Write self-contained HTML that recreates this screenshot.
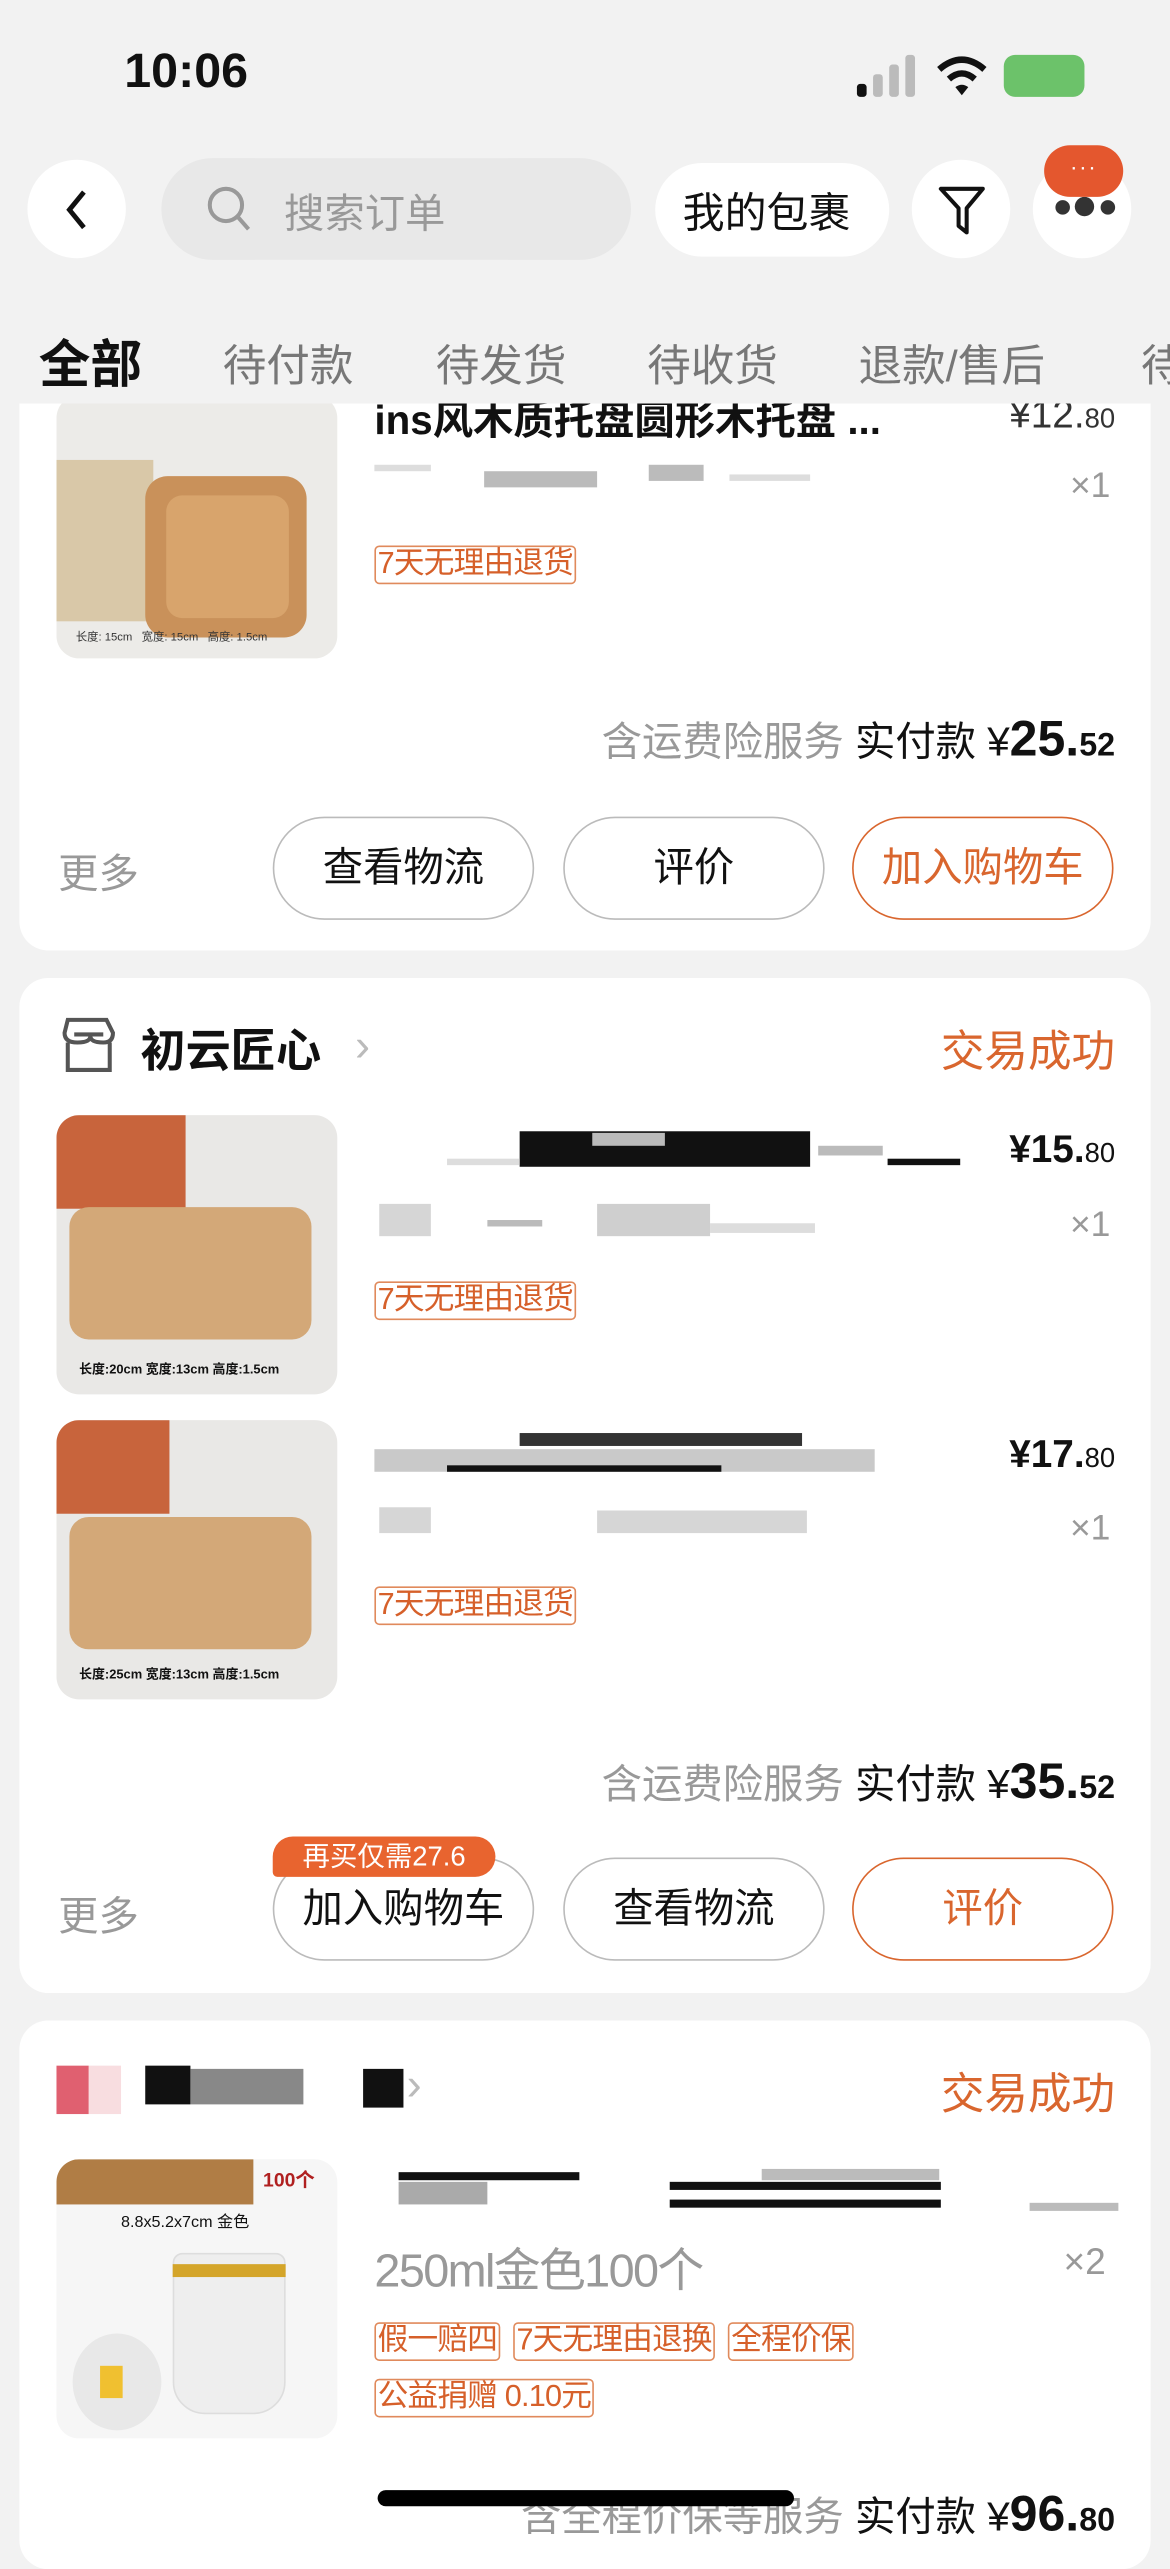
<!DOCTYPE html>
<html><head><meta charset="utf-8">
<style>
*{margin:0;padding:0;box-sizing:border-box}
html,body{width:1170px;height:2532px;overflow:hidden;background:#f2f2f2}
#w{position:absolute;left:0;top:0;width:725px;height:1569px;transform:scale(1.61379);transform-origin:0 0;font-family:"Liberation Sans","Noto Sans CJK SC",sans-serif;color:#111}
.a{position:absolute}
.card{position:absolute;left:12px;width:701px;background:#fff;border-radius:18px}
.t{position:absolute;white-space:nowrap}
.btn{position:absolute;height:64px;border:1px solid #bbb;border-radius:32px;background:#fff;font-size:25px;text-align:center;line-height:62px;color:#111}
.btn.o{border-color:#d9662e;color:#d9662e}
.tag{position:absolute;height:24px;border:1px solid #e08a5c;border-radius:3px;color:#d6602a;font-size:19px;line-height:22px;padding:0 1px;letter-spacing:-0.5px;white-space:nowrap}
.row{position:absolute;display:flex;gap:8px}
.row .tag{position:static}
.gray{color:#999}
.price{position:absolute;font-size:24px;font-weight:bold;right:22px}
.price small{font-size:17px;font-weight:normal}
.blk{position:absolute;background:#111}
.g1{position:absolute;background:#bbb}
.g2{position:absolute;background:#ddd}
.img{position:absolute;left:23px;width:174px;height:173px;border-radius:14px;overflow:hidden;background:#e9e8e6}
.tot{position:absolute;right:22px;font-size:25px;white-space:nowrap}
.tot b{font-size:31px}
.tot b small{font-size:20px}
</style></head><body><div id="w">
<div class="t" style="left:77px;top:28px;font-size:30px;font-weight:600">10:06</div>
<div class="a" style="left:531px;top:52px;width:6px;height:8px;background:#111;border-radius:2px"></div>
<div class="a" style="left:541px;top:46px;width:6px;height:14px;background:#bbb;border-radius:2px"></div>
<div class="a" style="left:551px;top:40px;width:6px;height:20px;background:#bbb;border-radius:2px"></div>
<div class="a" style="left:561px;top:34px;width:6px;height:26px;background:#bbb;border-radius:2px"></div>
<svg class="a" style="left:580px;top:34px" width="32" height="26" viewBox="0 0 32 26"><path d="M2 9 Q16 -3 30 9" stroke="#111" stroke-width="4" fill="none"/><path d="M8 15 Q16 8 24 15" stroke="#111" stroke-width="4" fill="none"/><path d="M12 20 L16 25 L20 20 Q16 17 12 20Z" fill="#111"/></svg>
<div class="a" style="left:622px;top:34px;width:50px;height:26px;background:#6cc26a;border-radius:7px"></div>
<div class="a" style="left:17px;top:99px;width:61px;height:61px;border-radius:50%;background:#fff"></div>
<svg class="a" style="left:38px;top:116px" width="20" height="28"><path d="M14 3 L5 14 L14 25" stroke="#111" stroke-width="3" fill="none"/></svg>
<div class="a" style="left:100px;top:98px;width:291px;height:63px;border-radius:32px;background:#e8e8e8"></div>
<svg class="a" style="left:127px;top:114px" width="30" height="32"><circle cx="13" cy="13" r="10" stroke="#999" stroke-width="2.5" fill="none"/><path d="M20 20 L27 28" stroke="#999" stroke-width="2.5"/></svg>
<div class="t" style="left:176px;top:113px;font-size:25px;color:#999">搜索订单</div>
<div class="a" style="left:406px;top:101px;width:145px;height:58px;border-radius:29px;background:#fff"></div>
<div class="t" style="left:423px;top:112px;font-size:26px">我的包裹</div>
<div class="a" style="left:565px;top:99px;width:61px;height:61px;border-radius:50%;background:#fff"></div>
<svg class="a" style="left:580px;top:114px" width="32" height="34"><path d="M3 3 H29 L19 15 V30 L14 26 V15 Z" stroke="#111" stroke-width="2.5" fill="none" stroke-linejoin="round"/></svg>
<div class="a" style="left:640px;top:99px;width:61px;height:61px;border-radius:50%;background:#fff"></div>
<div class="a" style="left:654px;top:124px;width:9px;height:9px;border-radius:50%;background:#333"></div>
<div class="a" style="left:666px;top:122px;width:12px;height:12px;border-radius:50%;background:#333"></div>
<div class="a" style="left:682px;top:124px;width:9px;height:9px;border-radius:50%;background:#333"></div>
<div class="a" style="left:647px;top:90px;width:49px;height:32px;border-radius:16px;background:#e4572e;color:#fff;font-size:14px;text-align:center;line-height:26px;letter-spacing:1px">···</div>
<div class="t" style="left:24px;top:201px;font-size:32px;font-weight:bold">全部</div>
<div class="t" style="left:138px;top:205px;font-size:27px;color:#777">待付款</div>
<div class="t" style="left:270px;top:205px;font-size:27px;color:#777">待发货</div>
<div class="t" style="left:401px;top:205px;font-size:27px;color:#777">待收货</div>
<div class="t" style="left:532px;top:205px;font-size:27px;color:#777">退款/售后</div>
<div class="t" style="left:707px;top:205px;font-size:27px;color:#777">待</div>

<div class="a" style="left:0;top:250px;width:725px;height:340px;overflow:hidden">
<div class="card" style="top:-40px;height:379px">
 <div class="img" style="top:35px;height:163px;background:#ecebe8">
  <div class="a" style="left:0;top:40px;width:60px;height:100px;background:#d9c8a8"></div>
  <div class="a" style="left:55px;top:50px;width:100px;height:100px;border-radius:14px;background:#c9915a"></div>
  <div class="a" style="left:68px;top:62px;width:76px;height:76px;border-radius:10px;background:#d8a46c"></div>
  <div class="t" style="left:12px;top:145px;font-size:7px;color:#333">长度: 15cm &nbsp; 宽度: 15cm &nbsp; 高度: 1.5cm</div>
 </div>
 <div class="t" style="left:220px;top:31px;font-size:25px;font-weight:bold">ins风木质托盘圆形木托盘 ...</div>
 <div class="price" style="top:34px;font-weight:normal;color:#333">¥12.<small>80</small></div>
 <div class="g2" style="left:220px;top:78px;width:35px;height:4px"></div>
 <div class="g1" style="left:288px;top:82px;width:70px;height:10px"></div>
 <div class="g1" style="left:390px;top:78px;width:34px;height:10px"></div>
 <div class="g2" style="left:440px;top:84px;width:50px;height:4px"></div>
 <div class="t gray" style="left:651px;top:78px;font-size:22px">×1</div>
 <div class="tag" style="left:220px;top:128px">7天无理由退货</div>
 <div class="tot" style="top:230px"><span class="gray">含运费险服务</span> 实付款 ¥<b>25.<small>52</small></b></div>
 <div class="t gray" style="left:24px;top:312px;font-size:25px">更多</div>
 <div class="btn" style="left:157px;top:296px;width:162px">查看物流</div>
 <div class="btn" style="left:337px;top:296px;width:162px">评价</div>
 <div class="btn o" style="left:516px;top:296px;width:162px">加入购物车</div>
</div></div>

<div class="card" style="top:606px;height:629px">
 <svg class="a" style="left:24px;top:22px" width="40" height="40"><path d="M6 4 H30 L34 12 Q34 18 28 18 Q20 18 20 14 Q20 18 12 18 Q4 18 4 12 Z" stroke="#555" stroke-width="2.5" fill="none"/><path d="M6 18 V35 H32 V18" stroke="#555" stroke-width="2.5" fill="none"/><path d="M10 13 H28" stroke="#555" stroke-width="2.5"/></svg>
 <div class="t" style="left:75px;top:24px;font-size:28px;font-weight:bold">初云匠心</div>
 <div class="t" style="left:208px;top:26px;font-size:28px;color:#bbb">›</div>
 <div class="t" style="right:22px;top:24px;font-size:27px;color:#d9662e">交易成功</div>
 <div class="img" style="top:85px">
  <div class="a" style="left:0;top:0;width:80px;height:58px;background:#c8643c"></div>
  <div class="a" style="left:8px;top:57px;width:150px;height:82px;border-radius:12px;background:#d3a878"></div>
  <div class="t" style="left:14px;top:152px;font-size:8px;font-weight:bold">长度:20cm 宽度:13cm 高度:1.5cm</div>
 </div>
 <div class="blk" style="left:310px;top:95px;width:180px;height:22px"></div>
 <div class="g1" style="left:355px;top:96px;width:45px;height:8px"></div>
 <div class="g1" style="left:495px;top:104px;width:40px;height:6px"></div>
 <div class="blk" style="left:538px;top:112px;width:45px;height:4px"></div>
 <div class="g2" style="left:265px;top:112px;width:45px;height:4px"></div>
 <div class="price" style="top:93px">¥15.<small>80</small></div>
 <div class="g1" style="left:223px;top:140px;width:32px;height:20px;opacity:.6"></div>
 <div class="g1" style="left:290px;top:150px;width:34px;height:4px"></div>
 <div class="g1" style="left:358px;top:140px;width:70px;height:20px;opacity:.7"></div>
 <div class="g2" style="left:428px;top:152px;width:65px;height:6px"></div>
 <div class="t gray" style="left:651px;top:140px;font-size:22px">×1</div>
 <div class="tag" style="left:220px;top:188px">7天无理由退货</div>
 <div class="img" style="top:274px">
  <div class="a" style="left:0;top:0;width:70px;height:58px;background:#c8643c"></div>
  <div class="a" style="left:8px;top:60px;width:150px;height:82px;border-radius:12px;background:#d3a878"></div>
  <div class="t" style="left:14px;top:152px;font-size:8px;font-weight:bold">长度:25cm 宽度:13cm 高度:1.5cm</div>
 </div>
 <div class="g1" style="left:220px;top:292px;width:310px;height:14px;opacity:.8"></div>
 <div class="blk" style="left:310px;top:282px;width:175px;height:8px;opacity:.85"></div>
 <div class="blk" style="left:265px;top:302px;width:170px;height:4px"></div>
 <div class="price" style="top:282px">¥17.<small>80</small></div>
 <div class="g1" style="left:223px;top:328px;width:32px;height:16px;opacity:.6"></div>
 <div class="g1" style="left:358px;top:330px;width:130px;height:14px;opacity:.6"></div>
 <div class="t gray" style="left:651px;top:328px;font-size:22px">×1</div>
 <div class="tag" style="left:220px;top:377px">7天无理由退货</div>
 <div class="tot" style="top:480px"><span class="gray">含运费险服务</span> 实付款 ¥<b>35.<small>52</small></b></div>
 <div class="t gray" style="left:24px;top:562px;font-size:25px">更多</div>
 <div class="btn" style="left:157px;top:545px;width:162px">加入购物车</div>
 <div class="a" style="left:157px;top:532px;width:138px;height:25px;border-radius:13px 13px 13px 3px;background:#e8642f;color:#fff;font-size:17px;line-height:25px;text-align:center">再买仅需27.6</div>
 <div class="btn" style="left:337px;top:545px;width:162px">查看物流</div>
 <div class="btn o" style="left:516px;top:545px;width:162px">评价</div>
</div>

<div class="card" style="top:1252px;height:340px">
 <div class="a" style="left:23px;top:28px;width:20px;height:30px;background:#e06070"></div>
 <div class="a" style="left:43px;top:28px;width:20px;height:30px;background:#f8dde0"></div>
 <div class="blk" style="left:78px;top:28px;width:28px;height:24px"></div>
 <div class="g1" style="left:106px;top:30px;width:70px;height:22px;background:#888"></div>
 <div class="blk" style="left:213px;top:30px;width:25px;height:24px"></div>
 <div class="t" style="left:240px;top:24px;font-size:28px;color:#bbb">›</div>
 <div class="t" style="right:22px;top:24px;font-size:27px;color:#d9662e">交易成功</div>
 <div class="img" style="top:86px;background:#f6f6f6">
  <div class="a" style="left:0;top:0;width:122px;height:28px;background:#b07d45"></div>
  <div class="t" style="left:128px;top:4px;font-size:12px;font-weight:bold;color:#b02020">100个</div>
  <div class="t" style="left:40px;top:30px;font-size:10px">8.8x5.2x7cm 金色</div>
  <div class="a" style="left:72px;top:58px;width:70px;height:100px;border-radius:6px 6px 20px 20px;background:#eee;border:1px solid #ddd"></div>
  <div class="a" style="left:72px;top:65px;width:70px;height:8px;background:#d4a52a"></div>
  <div class="a" style="left:10px;top:108px;width:55px;height:60px;border-radius:50%;background:#e8e8e8"></div>
  <div class="a" style="left:27px;top:128px;width:14px;height:20px;background:#f0c030"></div>
 </div>
 <div class="blk" style="left:235px;top:94px;width:112px;height:5px"></div>
 <div class="g1" style="left:235px;top:100px;width:55px;height:14px;background:#aaa"></div>
 <div class="blk" style="left:403px;top:100px;width:168px;height:5px"></div>
 <div class="blk" style="left:403px;top:111px;width:168px;height:5px"></div>
 <div class="g1" style="left:460px;top:92px;width:110px;height:7px"></div>
 <div class="g1" style="left:626px;top:113px;width:55px;height:5px"></div>
 <div class="t gray" style="left:220px;top:132px;font-size:29px;letter-spacing:-1px">250ml金色100个</div>
 <div class="t gray" style="left:647px;top:136px;font-size:23px">×2</div>
 <div class="row" style="left:220px;top:187px"><div class="tag">假一赔四</div><div class="tag">7天无理由退换</div><div class="tag">全程价保</div></div>
 <div class="tag" style="left:220px;top:222px">公益捐赠 0.10元</div>
 <div class="tot" style="top:288px"><span class="gray">含全程价保等服务</span> 实付款 ¥<b>96.<small>80</small></b></div>
</div>
<div class="a" style="left:234px;top:1543px;width:258px;height:10px;border-radius:5px;background:#000"></div>
</div></body></html>
